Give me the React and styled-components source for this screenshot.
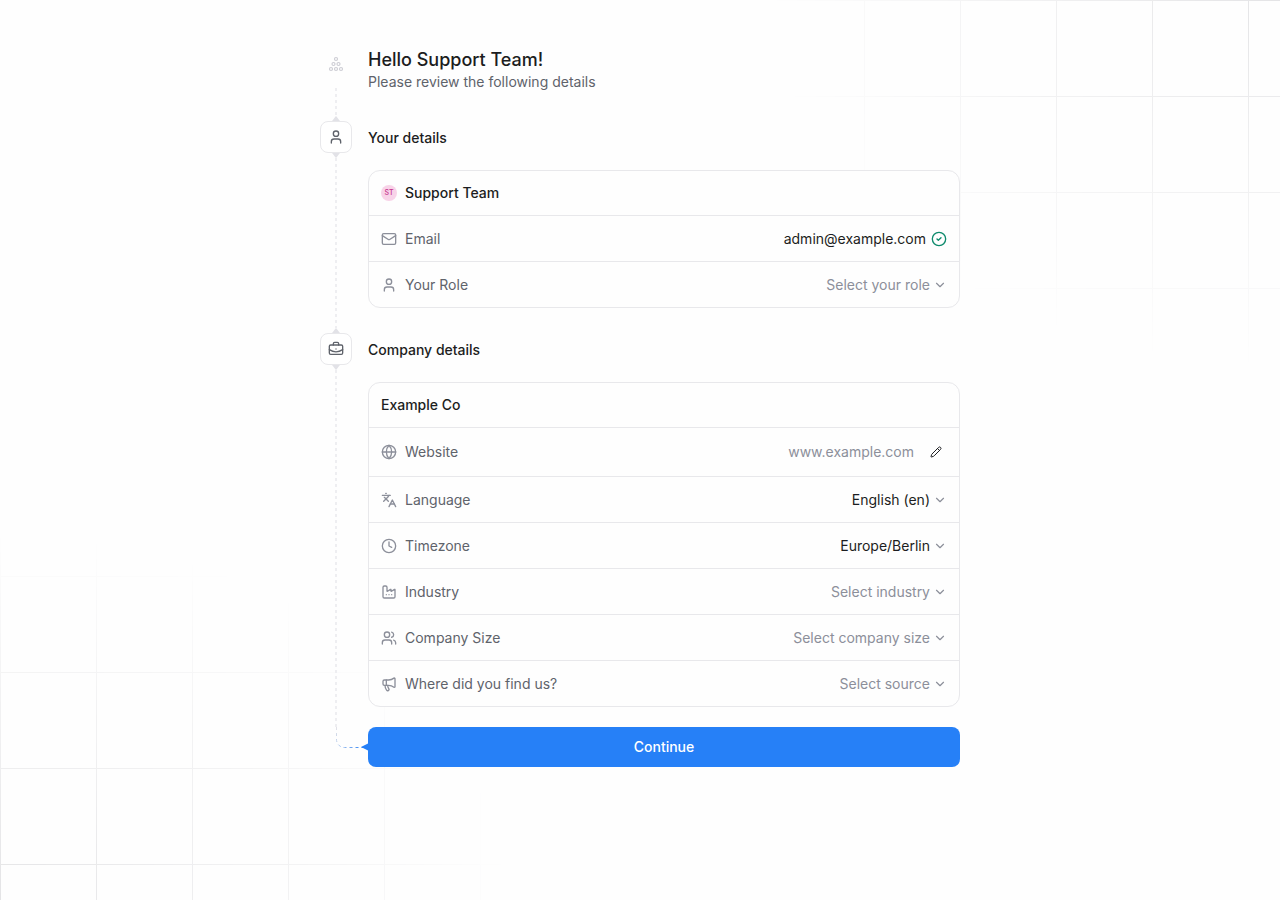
import React, { useState } from 'react'
import styled, { createGlobalStyle, css } from 'styled-components'
import {
    BriefcaseBusiness,
    ChevronDown,
    CircleCheck,
    Clock,
    Factory,
    Globe,
    Languages,
    Mail,
    Megaphone,
    Pencil,
    User,
    Users
} from 'lucide-react'

const colours = {
    page: '#fefefe',
    card: '#fefefe',
    line: '#e8e8eb',
    rail: '#eeeef1',
    arrow: '#e2e2e7',
    text: '#1c1d21',
    secondary: '#5f636b',
    muted: '#8c8f9a',
    accent: '#2680f7',
    success: '#0d8a6c'
}

const GlobalStyle = createGlobalStyle`
    *, *::before, *::after {
        box-sizing: border-box;
    }

    body {
        margin: 0;
        background-color: ${colours.page};
        color: ${colours.text};
        font-family: Inter, "Liberation Sans", sans-serif;
        font-size: 14px;
        line-height: 20px;
        text-rendering: optimizeSpeed;
    }

    button, input, select {
        font: inherit;
        text-rendering: inherit;
    }
`

const Page = styled.div`
    position: relative;
    min-height: 100vh;
    padding: 48px 16px;
`

const gridLines = css`
    background-image:
        linear-gradient(to right, #e4e4e6 1px, transparent 1px),
        linear-gradient(to bottom, #e4e4e6 1px, transparent 1px);
    background-size: 96px 96px;
`

const GridBackdrop = styled.div`
    position: absolute;
    inset: 0;
    pointer-events: none;
    ${gridLines}
    mask-image: radial-gradient(40% 41% at ${props => props.$corner}, #000, transparent);
`

const Form = styled.form`
    position: relative;
    width: 100%;
    max-width: 640px;
    margin: 0 auto;
`

const Step = styled.section`
    display: grid;
    grid-template-columns: 32px minmax(0, 1fr);
    column-gap: 16px;
`

const Rail = styled.div`
    display: flex;
    flex-direction: column;
    align-items: center;
`

const StepIcon = styled.div`
    display: flex;
    align-items: center;
    justify-content: center;
    width: 32px;
    height: 32px;
    border: 1px solid ${colours.line};
    border-radius: 8px;
    background-color: #fff;
    color: ${colours.secondary};
`

const LogoBox = styled.div`
    display: flex;
    align-items: center;
    justify-content: center;
    width: 32px;
    height: 32px;
    margin-bottom: 8px;
`

const Dashes = styled.div`
    flex: 1;
    width: 2px;
    background-image: repeating-linear-gradient(
        to bottom,
        ${colours.rail} 0,
        ${colours.rail} 3px,
        transparent 3px,
        transparent 6px
    );
`

const Arrow = styled.div`
    width: 8px;
    height: 5px;
    background-color: ${colours.arrow};
    clip-path: ${props => props.$down
        ? 'polygon(0 0, 100% 0, 50% 100%)'
        : 'polygon(50% 0, 100% 100%, 0 100%)'};
`

const Intro = styled.header`
    padding-bottom: 29px;
`

const Title = styled.h1`
    margin: 0;
    font-size: 18px;
    font-weight: 500;
    line-height: 24px;
`

const Subtitle = styled.p`
    margin: 0;
    color: ${colours.secondary};
`

const StepBody = styled.div`
    padding-bottom: ${props => props.$gap};
`

const StepTitle = styled.h2`
    margin: 0 0 15px;
    font-size: 14px;
    font-weight: 500;
    line-height: 34px;
`

const Card = styled.div`
    border: 1px solid ${colours.line};
    border-radius: 12px;
    background-color: ${colours.card};
`

const CardHeader = styled.div`
    display: flex;
    align-items: center;
    gap: 8px;
    min-height: 44px;
    padding: 0 12px;
    font-weight: 500;
`

const Row = styled.div`
    display: flex;
    align-items: center;
    justify-content: space-between;
    gap: 16px;
    min-height: ${props => props.$tall ? '49px' : '46px'};
    padding: 0 12px;
    border-top: 1px solid ${colours.line};
`

const Label = styled.label`
    display: flex;
    align-items: center;
    gap: 8px;
    color: ${colours.secondary};

    svg {
        color: ${colours.muted};
    }
`

const Avatar = styled.span`
    display: flex;
    align-items: center;
    justify-content: center;
    width: 16px;
    height: 16px;
    border-radius: 50%;
    background-color: #f8d3e8;
    color: #c7378f;
    font-size: 7px;
    line-height: 16px;
`

const Verified = styled.div`
    display: flex;
    align-items: center;
    gap: 5px;

    svg {
        color: ${colours.success};
    }
`

const SelectBox = styled.div`
    display: grid;
    align-items: center;
    justify-items: end;
    color: ${colours.muted};

    svg {
        grid-area: 1 / 1;
        pointer-events: none;
    }
`

const Select = styled.select`
    grid-area: 1 / 1;
    appearance: none;
    field-sizing: content;
    padding: 0 17px 0 0;
    border: 0;
    background: transparent;
    color: ${props => props.$empty ? colours.muted : colours.text};
    cursor: pointer;
`

const WebsiteField = styled.div`
    display: flex;
    align-items: center;
    gap: 11px;
`

const TextInput = styled.input`
    width: 200px;
    padding: 0;
    border: 0;
    outline: 0;
    background: transparent;
    text-align: right;

    &::placeholder {
        color: ${colours.muted};
        opacity: 1;
    }
`

const IconButton = styled.button`
    display: flex;
    align-items: center;
    justify-content: center;
    width: 22px;
    height: 22px;
    padding: 0;
    border: 0;
    background: transparent;
    color: ${colours.text};
    cursor: pointer;
`

const Footer = styled.div`
    display: grid;
    grid-template-columns: 33px minmax(0, 1fr);
    padding-left: 15px;
`

const SubmitButton = styled.button`
    height: 40px;
    border: 0;
    border-radius: 8px;
    background-color: ${colours.accent};
    color: #fff;
    font-weight: 500;
    cursor: pointer;
`

const iconProps = { size: 16, strokeWidth: 2, 'aria-hidden': true }

function Logo() {
    const dots = [[8, 3], [5.5, 8], [10.5, 8], [3, 13], [8, 13], [13, 13]]

    return (
        <svg width="16" height="16" viewBox="0 0 16 16" fill="none" stroke="#cdcdd4" aria-hidden="true">
            {dots.map(([cx, cy]) => (
                <circle key={`${cx}-${cy}`} cx={cx} cy={cy} r="1.5" strokeWidth="1.2" />
            ))}
        </svg>
    )
}

function Elbow() {
    return (
        <svg width="33" height="40" viewBox="0 0 33 40" fill="none" aria-hidden="true">
            <defs>
                <linearGradient id="elbow" gradientUnits="userSpaceOnUse" x1="1" y1="2" x2="32" y2="20">
                    <stop stopColor={colours.arrow} />
                    <stop offset="1" stopColor={colours.accent} />
                </linearGradient>
            </defs>
            <path d="M1.5 0V12a8 8 0 0 0 8 8.5H28" stroke="url(#elbow)" strokeDasharray="3 3" />
            <path d="M26 20L33 16.5V23.5Z" fill={colours.accent} />
        </svg>
    )
}

function SelectRow(props) {
    const [value, setValue] = useState(props.options[0])
    const Icon = props.icon

    return (
        <Row>
            <Label htmlFor={props.id}>
                <Icon {...iconProps} />
                {props.label}
            </Label>
            <SelectBox>
                <Select
                    id={props.id}
                    value={value}
                    $empty={props.empty}
                    onChange={event => setValue(event.target.value)}
                >
                    {props.options.map(option => (
                        <option key={option}>{option}</option>
                    ))}
                </Select>
                <ChevronDown size={14} aria-hidden="true" />
            </SelectBox>
        </Row>
    )
}

function App() {
    const [website, setWebsite] = useState('')

    function handleSubmit(event) {
        event.preventDefault()
    }

    return (
        <Page>
            <GlobalStyle />
            <GridBackdrop $corner="100% 0" />
            <GridBackdrop $corner="0 100%" />
            <Form onSubmit={handleSubmit}>
                <Step>
                    <Rail>
                        <LogoBox><Logo /></LogoBox>
                        <Dashes />
                        <Arrow />
                    </Rail>
                    <Intro>
                        <Title>Hello Support Team!</Title>
                        <Subtitle>Please review the following details</Subtitle>
                    </Intro>
                </Step>

                <Step>
                    <Rail>
                        <StepIcon><User {...iconProps} /></StepIcon>
                        <Arrow $down />
                        <Dashes />
                        <Arrow />
                    </Rail>
                    <StepBody $gap="25px">
                        <StepTitle>Your details</StepTitle>
                        <Card>
                            <CardHeader>
                                <Avatar>ST</Avatar>
                                Support Team
                            </CardHeader>
                            <Row>
                                <Label as="span">
                                    <Mail {...iconProps} />
                                    Email
                                </Label>
                                <Verified>
                                    admin@example.com
                                    <CircleCheck {...iconProps} />
                                </Verified>
                            </Row>
                            <SelectRow id="role" icon={User} label="Your Role" options={['Select your role']} empty />
                        </Card>
                    </StepBody>
                </Step>

                <Step>
                    <Rail>
                        <StepIcon><BriefcaseBusiness {...iconProps} /></StepIcon>
                        <Arrow $down />
                        <Dashes />
                    </Rail>
                    <StepBody $gap="20px">
                        <StepTitle>Company details</StepTitle>
                        <Card>
                            <CardHeader>Example Co</CardHeader>
                            <Row $tall>
                                <Label htmlFor="website">
                                    <Globe {...iconProps} />
                                    Website
                                </Label>
                                <WebsiteField>
                                    <TextInput
                                        id="website"
                                        placeholder="www.example.com"
                                        value={website}
                                        onChange={event => setWebsite(event.target.value)}
                                    />
                                    <IconButton type="button" aria-label="Edit website">
                                        <Pencil size={12} strokeWidth={2} />
                                    </IconButton>
                                </WebsiteField>
                            </Row>
                            <SelectRow id="language" icon={Languages} label="Language" options={['English (en)']} />
                            <SelectRow id="timezone" icon={Clock} label="Timezone" options={['Europe/Berlin']} />
                            <SelectRow id="industry" icon={Factory} label="Industry" options={['Select industry']} empty />
                            <SelectRow id="size" icon={Users} label="Company Size" options={['Select company size']} empty />
                            <SelectRow id="source" icon={Megaphone} label="Where did you find us?" options={['Select source']} empty />
                        </Card>
                    </StepBody>
                </Step>

                <Footer>
                    <Elbow />
                    <SubmitButton type="submit">Continue</SubmitButton>
                </Footer>
            </Form>
        </Page>
    )
}

export default App
